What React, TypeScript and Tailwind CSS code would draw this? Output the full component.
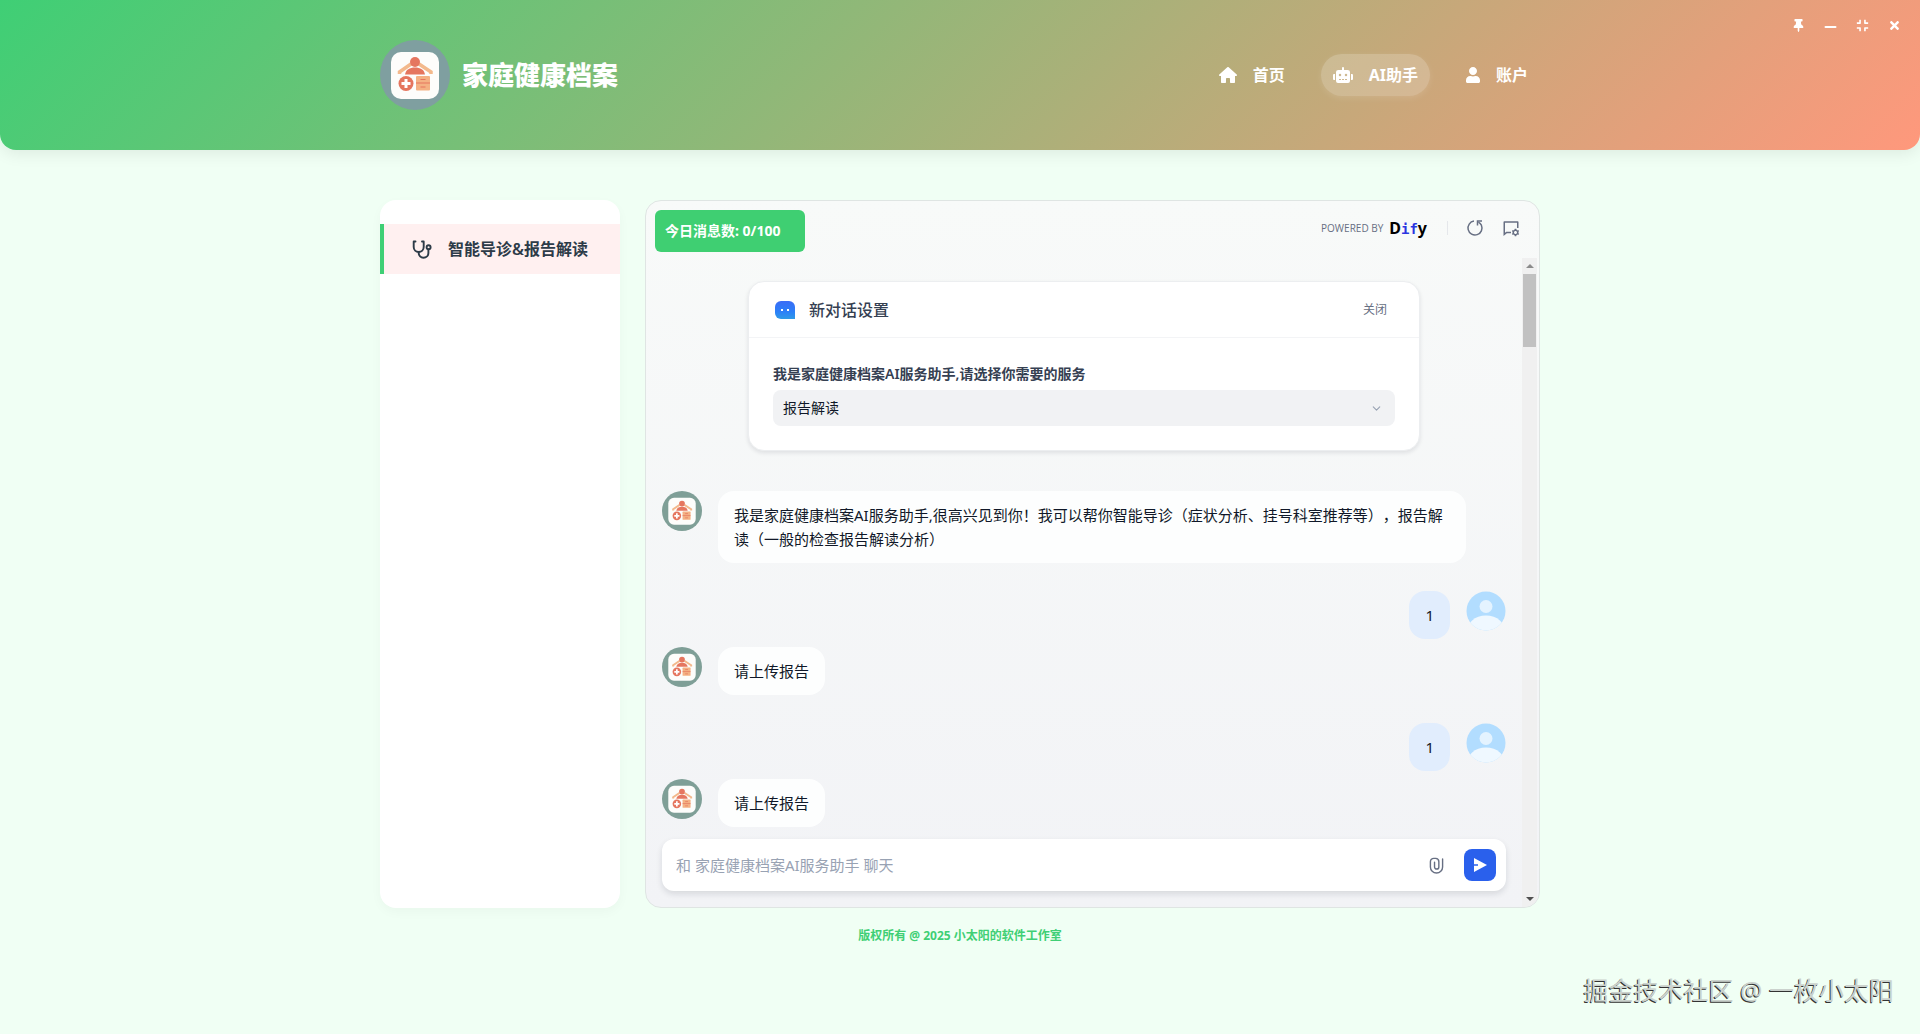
import React from 'react';
import { FaCompress, FaRobot, FaThumbtack, FaTimes, FaUser } from 'react-icons/fa';
import { RiChatSettingsLine } from 'react-icons/ri';
import { ChevronDown } from 'lucide-react';

type Message = { id: number; from: 'bot' | 'user'; text: string };
type IconProps = { className?: string };

const MESSAGES: Message[] = [
  {
    id: 1,
    from: 'bot',
    text: '我是家庭健康档案AI服务助手,很高兴见到你！我可以帮你智能导诊（症状分析、挂号科室推荐等），报告解读（一般的检查报告解读分析）',
  },
  { id: 2, from: 'user', text: '1' },
  { id: 3, from: 'bot', text: '请上传报告' },
  { id: 4, from: 'user', text: '1' },
  { id: 5, from: 'bot', text: '请上传报告' },
];

const HomeIcon: React.FC<IconProps> = ({ className }) => (
  <svg viewBox="0 0 18 16" className={className} fill="currentColor" aria-hidden="true">
    <path d="M9.700.300l8 7.100c.700.600.300 1.500-.500 1.500H16v6c0 .600-.400 1.100-1 1.100h-3.300c-.400 0-.700-.300-.700-.700V12c0-.600-.400-1-1-1H8c-.600 0-1 .400-1 1v3.300c0 .400-.300.700-.700.700H3c-.600 0-1-.500-1-1.100v-6H.800C0 8.900-.400 8 .300 7.400l8-7.100a1 1 0 0 1 1.400 0z" />
  </svg>
);

const MinimizeIcon: React.FC<IconProps> = ({ className }) => (
  <svg viewBox="0 0 13 13" className={className} stroke="currentColor" strokeWidth="2" strokeLinecap="round" aria-hidden="true">
    <path d="M1.500 8h10" />
  </svg>
);

const StethoscopeIcon: React.FC<IconProps> = ({ className }) => (
  <svg viewBox="0 0 20 19" className={className} fill="none" stroke="currentColor" strokeWidth="1.900" strokeLinecap="round" strokeLinejoin="round" aria-hidden="true">
    <path d="M3.500 1.500H1.700V7a5 5 0 0 0 10 0V1.500H10" />
    <path d="M6.700 12v1a4.700 4.700 0 0 0 4.700 4.700c3 0 5-2 5-4.700V9.500" />
    <circle cx="16.600" cy="7.200" r="2" />
  </svg>
);

const ResetIcon: React.FC<IconProps> = ({ className }) => (
  <svg viewBox="0 0 18 18" className={className} fill="none" stroke="currentColor" strokeWidth="1.500" aria-hidden="true">
    <path d="M8 2.100a7 7 0 1 0 7.400 4.100c-.500-1-1.500-2.200-3-3.100" />
    <path d="M16 2h-4.500v4.500" />
  </svg>
);

const ClipIcon: React.FC<IconProps> = ({ className }) => (
  <svg viewBox="0 0 16 18" className={className} fill="none" stroke="currentColor" strokeWidth="1.500" strokeLinecap="round" aria-hidden="true">
    <path d="M14.500 2v8.500a6.500 6.500 0 0 1-13 0V5a3.600 3.600 0 0 1 3.600-3.600h2A3.600 3.600 0 0 1 10.500 5v5.500a2.300 2.300 0 0 1-4.600 0V5.500" />
  </svg>
);

const NAV = [
  { label: '首页', icon: HomeIcon, size: 'h-4 w-[18px]', active: false },
  { label: 'AI助手', icon: FaRobot, size: 'h-4 w-5', active: true },
  { label: '账户', icon: FaUser, size: 'h-4 w-3.5', active: false },
];

const WINDOW_BUTTONS = [
  { label: '置顶', icon: FaThumbtack },
  { label: '最小化', icon: MinimizeIcon },
  { label: '还原', icon: FaCompress },
  { label: '关闭窗口', icon: FaTimes },
];

const Logo: React.FC<{ className: string; ring: string }> = ({ className, ring }) => (
  <svg viewBox="0 0 70 70" className={className} aria-hidden="true">
    <circle cx="35" cy="35" r="35" fill={ring} />
    <rect x="11" y="12" width="48" height="47" rx="10" fill="#fdfdfb" />
    <path d="M19.500 34v-2L31 24M39 24l12 8v2" fill="none" stroke="#f3b98c" strokeWidth="3.500" />
    <circle cx="35" cy="22" r="5" fill="#e5765f" />
    <path d="M25 34.500c1-5 4.500-7 10-7s9 2 10 7z" fill="#e5765f" />
    <circle cx="26" cy="43.500" r="7.500" fill="#e5765f" />
    <path d="M24.500 39h3v3h3v3h-3v3h-3v-3h-3v-3h3z" fill="#fff" />
    <rect x="36" y="36" width="14" height="14.500" rx="1" fill="#f4b183" />
    <path d="M36 43h14M40.500 39.500h5M40.500 47h5" stroke="#e5765f" strokeWidth="1.200" />
  </svg>
);

const UserAvatar: React.FC = () => (
  <svg viewBox="0 0 40 40" className="size-10 shrink-0" aria-hidden="true">
    <defs>
      <clipPath id="user-clip">
        <circle cx="20" cy="20" r="19.500" />
      </clipPath>
    </defs>
    <g clipPath="url(#user-clip)">
      <rect width="40" height="40" fill="#b2ddff" />
      <circle cx="20" cy="15.500" r="6.500" fill="#e4f3ff" />
      <ellipse cx="20" cy="42" rx="20" ry="17.500" fill="#eff8ff" />
    </g>
  </svg>
);

const BotIcon: React.FC = () => (
  <svg viewBox="0 0 20 18" className="h-[18px] w-5" aria-hidden="true">
    <defs>
      <linearGradient id="bot-fill" x1="0" y1="0" x2="0" y2="1">
        <stop offset="0" stopColor="#3b6cf6" />
        <stop offset="0.600" stopColor="#2b80f8" />
        <stop offset="1" stopColor="#2f9ae6" />
      </linearGradient>
    </defs>
    <path d="M6 0h8a6 6 0 0 1 6 6v12H6a6 6 0 0 1-6-6V6a6 6 0 0 1 6-6z" fill="url(#bot-fill)" />
    <path d="M6 8h2v2H6zM12 8h2v2h-2z" fill="#fff" />
  </svg>
);

const Header: React.FC = () => (
  <header className="relative rounded-b-2xl bg-[linear-gradient(135deg,#3fcf75_0%,#ff987c_100%)] py-10 shadow-[0_4px_16px_rgba(0,0,0,0.08)]">
    <div className="mx-auto flex max-w-[1200px] items-center justify-between px-5">
      <div className="flex items-center gap-3">
        <Logo className="size-[70px]" ring="#7f9fa0" />
        <h1 className="text-[26px] leading-8 font-black text-white">家庭健康档案</h1>
      </div>
      <nav className="flex items-center gap-6">
        {NAV.map(({ label, icon: Icon, size, active }) => (
          <a
            key={label}
            href="#"
            className={`flex h-[42px] items-center gap-4 rounded-full px-3 font-bold text-white ${active ? 'bg-white/20 shadow-[0_2px_6px_rgba(255,255,255,0.12)]' : ''}`}
          >
            <Icon className={size} />
            {label}
          </a>
        ))}
      </nav>
    </div>
    <div className="absolute top-[15px] right-4 flex gap-3 text-white">
      {WINDOW_BUTTONS.map(({ label, icon: Icon }) => (
        <button key={label} type="button" aria-label={label} className="flex size-5 items-center justify-center">
          <Icon className="size-[13px]" />
        </button>
      ))}
    </div>
  </header>
);

const SettingsCard: React.FC = () => (
  <section className="mx-auto w-full max-w-[672px] rounded-2xl border border-[#eceef0] bg-white shadow-[0_2px_4px_rgba(16,24,40,0.1)]">
    <div className="flex h-14 items-center gap-3.5 border-b border-gray-100 pr-8 pl-[26px]">
      <BotIcon />
      <h2 className="flex-1 font-medium text-[#354052]">新对话设置</h2>
      <button type="button" className="text-xs text-[#676f83]">关闭</button>
    </div>
    <div className="px-6 pt-6 pb-6">
      <label htmlFor="service" className="block h-7 text-sm leading-6 font-semibold text-[#354052]">
        我是家庭健康档案AI服务助手,请选择你需要的服务
      </label>
      <div className="relative">
        <select id="service" className="h-9 w-full appearance-none rounded-lg bg-[#f1f2f4] px-2.5 text-sm text-[#101828]">
          <option>报告解读</option>
          <option>智能导诊</option>
        </select>
        <ChevronDown size={13} className="pointer-events-none absolute top-3 right-3 text-[#98a2b3]" />
      </div>
    </div>
  </section>
);

const MessageRow: React.FC<{ message: Message }> = ({ message }) =>
  message.from === 'bot' ? (
    <div className="mb-7 flex items-start gap-4 pr-10">
      <Logo className="size-10 shrink-0" ring="#7f9f97" />
      <p className="rounded-2xl bg-[#fdfefe] px-4 py-3 text-[15px] leading-6 text-[#101828] [text-spacing-trim:space-all]">{message.text}</p>
    </div>
  ) : (
    <div className="mb-2 flex items-start justify-end gap-4">
      <p className="rounded-2xl bg-[#e1edfd] px-4 py-3 text-[15px] leading-6 text-[#101828]">{message.text}</p>
      <UserAvatar />
    </div>
  );

const ChatHeader: React.FC = () => (
  <div className="flex items-start justify-between pt-[9px] pr-[19px] pl-[9px]">
    <div className="h-[42px] w-[150px] rounded-md bg-[#3fcf72] px-2.5 text-sm leading-[42px] font-bold text-white">
      今日消息数: 0/100
    </div>
    <div className="flex h-9 items-center text-[#676f83]">
      <span className="font-['Open_Sans'] text-[10px]">POWERED BY</span>
      <span className="ml-1.5 flex items-baseline text-base leading-5 font-bold text-black">
        D
        <span className="font-['DejaVu_Sans_Mono'] text-sm text-[#2b35e0]">if</span>y
      </span>
      <span className="mr-[18px] ml-5 h-3.5 w-px bg-gray-200" />
      <button type="button" aria-label="重新开始">
        <ResetIcon className="size-[18px]" />
      </button>
      <button type="button" aria-label="对话设置" className="ml-[18px]">
        <RiChatSettingsLine size={18} />
      </button>
    </div>
  </div>
);

const ScrollBar: React.FC = () => (
  <div className="flex w-[15px] flex-col items-center justify-between bg-[#f0f0f0] py-1.5" aria-hidden="true">
    <div className="flex w-full flex-col items-center gap-1.5">
      <svg viewBox="0 0 8 4" className="h-1 w-2 text-[#8b8b8b]">
        <path d="M4 0l4 4H0z" fill="currentColor" />
      </svg>
      <div className="h-[73px] w-[13px] bg-[#c1c1c1]" />
    </div>
    <svg viewBox="0 0 8 4" className="h-1 w-2 text-[#505050]">
      <path d="M0 0h8L4 4z" fill="currentColor" />
    </svg>
  </div>
);

const Composer: React.FC = () => (
  <form className="flex h-[52px] items-center rounded-xl bg-white pr-2.5 pl-3.5 shadow-[0_3px_6px_rgba(16,24,40,0.12)]">
    <input
      type="text"
      aria-label="消息"
      placeholder="和 家庭健康档案AI服务助手 聊天"
      className="min-w-0 flex-1 text-[15px] outline-none placeholder:text-[#98a2b3]"
    />
    <button type="button" aria-label="上传附件" className="mr-5 text-[#676f83]">
      <ClipIcon className="h-[17px] w-[15px]" />
    </button>
    <button type="submit" aria-label="发送" className="flex size-8 items-center justify-center rounded-lg bg-[#2a60ec]">
      <svg viewBox="0 0 14 16" className="h-4 w-3.5" aria-hidden="true">
        <path d="M1 1l13 7-13 7V8.800h4V7.200H1z" fill="#fff" />
      </svg>
    </button>
  </form>
);

const App: React.FC = () => {
  return (
    <div className="relative flex min-h-screen flex-col bg-[#f0fff4] font-['Noto_Sans','Noto_Sans_CJK_SC',sans-serif]">
      <Header />

      <main className="mx-auto flex w-full max-w-[1200px] flex-1 gap-[25px] px-5 pt-[50px]">
        <aside className="w-60 shrink-0 rounded-2xl bg-white pt-6 shadow-[0_4px_12px_rgba(0,0,0,0.03)]">
          <a href="#" className="flex h-[50px] items-center gap-4 border-l-4 border-[#3fcf75] bg-[#fff0f0] pl-7 font-semibold text-[#2d3b48]">
            <StethoscopeIcon className="h-[19px] w-5" />
            智能导诊&amp;报告解读
          </a>
        </aside>

        <section className="flex min-w-0 flex-1 flex-col overflow-hidden rounded-2xl border border-[#dfe5e3] bg-gradient-to-b from-[#f8faf9] to-[#f2f3f6]">
          <ChatHeader />
          <div className="mt-1.5 flex flex-1">
            <div className="flex min-w-0 flex-1 flex-col px-4 pt-[23px] pb-4">
              <SettingsCard />
              <div className="mt-10 -mb-4">
                {MESSAGES.map(message => (
                  <MessageRow key={message.id} message={message} />
                ))}
              </div>
              <div className="mt-auto">
                <Composer />
              </div>
            </div>
            <ScrollBar />
            <div className="w-0.5" />
          </div>
        </section>
      </main>

      <footer className="h-[126px] pt-[18px] text-center text-xs leading-5 font-bold text-[#3fcf75]">
        版权所有 @ 2025 小太阳的软件工作室
      </footer>

      <div className="absolute right-[26px] bottom-[26px] text-[25px] leading-9 text-[#cbd2cd] [text-shadow:-1px_1px_0_#333]">
        掘金技术社区 @ 一枚小太阳
      </div>
    </div>
  );
};

export default App;
